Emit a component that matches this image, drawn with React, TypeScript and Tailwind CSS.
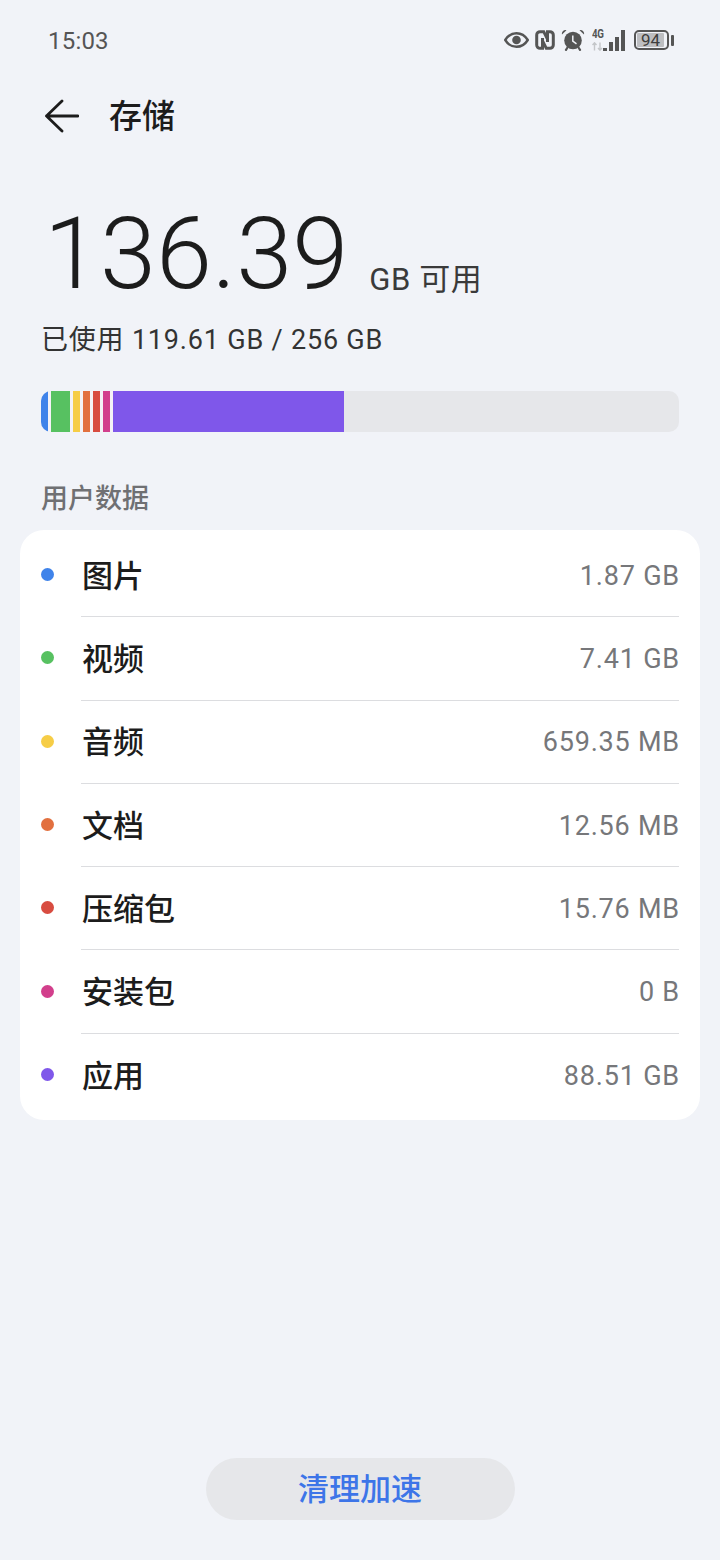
import React from "react";

const rows = [
  { name: "图片", size: "1.87 GB", dot: "bg-[#3f83ea]" },
  { name: "视频", size: "7.41 GB", dot: "bg-[#57c161]" },
  { name: "音频", size: "659.35 MB", dot: "bg-[#f6cd46]" },
  { name: "文档", size: "12.56 MB", dot: "bg-[#e2703f]" },
  { name: "压缩包", size: "15.76 MB", dot: "bg-[#d84c40]" },
  { name: "安装包", size: "0 B", dot: "bg-[#d23f8c]" },
  { name: "应用", size: "88.51 GB", dot: "bg-[#7f57ea]" },
];

function StatusIcons() {
  return (
    <div className="flex items-center gap-[6px] text-[#555555]">
      {/* eye */}
      <svg width="25" height="18" viewBox="0 0 25 18">
        <path d="M1.200 9C4 4.500 8 2.200 12.500 2.200S21 4.500 23.800 9C21 13.500 17 15.800 12.500 15.800S4 13.500 1.200 9z" fill="none" stroke="currentColor" strokeWidth="2.400" />
        <circle cx="12.500" cy="9" r="4.300" fill="currentColor" />
      </svg>
      {/* nfc */}
      <svg width="20" height="20" viewBox="0 0 20 20">
        <path d="M7.500 8v10.300H5a3.300 3.300 0 0 1-3.300-3.300V5A3.300 3.300 0 0 1 5 1.700h3.700l4 8" fill="none" stroke="currentColor" strokeWidth="3" />
        <path d="M12.500 12V1.700H15A3.300 3.300 0 0 1 18.300 5v10a3.300 3.300 0 0 1-3.300 3.300h-3.700l-4-8" fill="none" stroke="currentColor" strokeWidth="3" />
      </svg>
      {/* alarm */}
      <svg width="24" height="22" viewBox="0 0 24 22">
        <circle cx="12" cy="11.500" r="8.800" fill="currentColor" />
        <path d="M1 5.500a3.600 3.600 0 0 1 4.500-4.300zM23 5.500a3.600 3.600 0 0 0-4.500-4.300z" fill="currentColor" />
        <path d="M6.500 18.500 5 20.800M17.500 18.500l1.500 2.300" stroke="currentColor" strokeWidth="2.200" strokeLinecap="round" />
        <path d="M11.800 6.500v5.700l3.700 2.600" fill="none" stroke="#f1f3f8" strokeWidth="1.500" />
      </svg>
      {/* 4G + signal */}
      <div className="relative w-[34px] h-[22px]">
        <span className="absolute left-[1px] -top-[1px] text-[13px] leading-[12px] font-bold tracking-[-0.5px] origin-top-left scale-x-[0.75]">4G</span>
        <svg width="12" height="9" viewBox="0 0 12 9" className="absolute left-[1px] top-[13px] text-[#c4c6c9]">
          <path d="M2.500 8.500V1M.5 3 2.500 .8 4.500 3M8 .5V8M6 6l2 2.200L10 6" fill="none" stroke="currentColor" strokeWidth="1.400" />
        </svg>
        <div className="absolute right-0 bottom-0 flex items-end gap-[2px]">
          <div className="w-[4px] h-[3px] bg-[#555555]" />
          <div className="w-[4px] h-[9px] bg-[#555555]" />
          <div className="w-[4px] h-[14px] bg-[#555555]" />
          <div className="w-[4px] h-[21px] bg-[#555555]" />
        </div>
      </div>
      {/* battery */}
      <div className="flex items-center gap-[2px] ml-[3px]">
        <div className="w-[35px] h-[20px] rounded-[5px] border-2 border-[#555555] p-[1px]">
          <div className="w-[27px] h-full rounded-[1px] bg-[#bdbec1] flex items-center justify-center text-[17px] leading-none text-[#3e3e3e]">
            94
          </div>
        </div>
        <div className="w-[3px] h-[11px] rounded-[1px] bg-[#555555]" />
      </div>
    </div>
  );
}

export default function App() {
  return (
    <div
      className="w-[720px] h-[1560px] bg-[#f1f3f8] flex flex-col overflow-hidden"
      style={{ fontFamily: 'Roboto, "Noto Sans CJK SC", sans-serif' }}
    >
      {/* status bar */}
      <div className="h-[80px] pl-[48px] pr-[46px] flex items-center justify-between">
        <span className="text-[24px] text-[#555555] tracking-[0.2px] pt-[1px]">15:03</span>
        <StatusIcons />
      </div>

      {/* header */}
      <div className="h-[72px] pl-[44px] flex items-center gap-[30px]">
        <svg width="35" height="34" viewBox="0 0 35 34" className="text-[#1c1c1c]">
          <path d="M18 2 2.500 17 18 32M2.500 17H34" fill="none" stroke="currentColor" strokeWidth="2.800" strokeLinecap="round" strokeLinejoin="round" />
        </svg>
        <span className="text-[33px] font-medium text-[#1c1c1c] leading-none">存储</span>
      </div>

      {/* summary */}
      <div className="mt-[42px] pl-[44px] flex items-baseline">
        <span className="text-[101px] leading-[120px] font-light text-[#1c1c1c]">136.39</span>
        <span className="ml-[21px] text-[31px] leading-none text-[#3a3a3a] tracking-[0.6px] translate-y-[2px]">GB 可用</span>
      </div>
      <div className="mt-[6px] pl-[41px] text-[27px] leading-[40px] text-[#333333] tracking-[0.8px]">
        已使用 119.61 GB / 256 GB
      </div>

      {/* usage bar */}
      <div className="mt-[31px] mx-[41px] h-[41px] rounded-[10px] bg-[#e6e7ea] overflow-hidden flex">
        <div className="w-[7px] bg-[#3f83ea]" />
        <div className="w-[3px] bg-[#f4f2f6]" />
        <div className="w-[19px] bg-[#57c161]" />
        <div className="w-[3px] bg-[#f4f2f6]" />
        <div className="w-[7px] bg-[#f6cd46]" />
        <div className="w-[3px] bg-[#f4f2f6]" />
        <div className="w-[7px] bg-[#e2703f]" />
        <div className="w-[3px] bg-[#f4f2f6]" />
        <div className="w-[7px] bg-[#d84c40]" />
        <div className="w-[3px] bg-[#f4f2f6]" />
        <div className="w-[7px] bg-[#d23f8c]" />
        <div className="w-[3px] bg-[#f4f2f6]" />
        <div className="w-[231px] bg-[#7f57ea]" />
      </div>

      {/* section title */}
      <div className="mt-[48px] pl-[41px] text-[27px] leading-[38px] font-medium text-[#6f7073]">用户数据</div>

      {/* list */}
      <div className="mt-[12px] mx-[20px] h-[590px] rounded-[24px] bg-white pt-[4px] flex flex-col">
        {rows.map((row, i) => (
          <div key={row.name} className="h-[83.3px] pl-[21px] pr-[21px] flex items-center">
            <div className={`w-[13px] h-[13px] rounded-full mr-[27px] -mt-[2px] ${row.dot}`} />
            <div className={`flex-1 h-full pt-[2px] flex items-center justify-between ${i < rows.length - 1 ? "border-b border-[#dcdde0]" : ""}`}>
              <span className="ml-[1px] text-[31px] font-medium text-[#1c1c1c] leading-none">{row.name}</span>
              <span className="-mr-[1px] text-[27px] text-[#76777a] leading-none tracking-[0.8px]">{row.size}</span>
            </div>
          </div>
        ))}
      </div>

      {/* bottom button */}
      <div className="mt-[338px] flex justify-center">
        <div className="w-[309px] h-[62px] pt-[2px] rounded-full bg-[#e6e7ea] flex items-center justify-center text-[31px] font-medium text-[#3d75e8]">
          清理加速
        </div>
      </div>
    </div>
  );
}
